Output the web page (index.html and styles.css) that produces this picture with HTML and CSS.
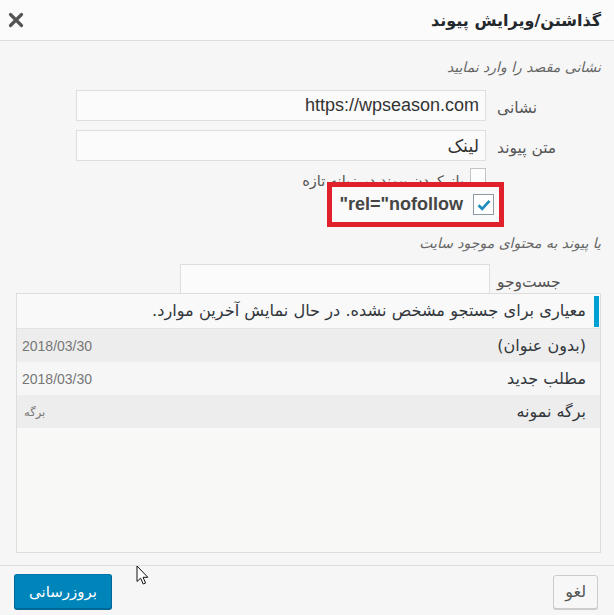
FILE: index.html
```html
<!DOCTYPE html>
<html lang="fa" dir="rtl">

<head>
  <meta charset="UTF-8" />
  <meta name="viewport" content="width=device-width, initial-scale=1.0" />
  <title>گذاشتن/ویرایش پیوند</title>
  <link rel="stylesheet" href="styles.css">
</head>

<body>
  <div class="dialog">
    <div class="dlg-head">
      <h1>گذاشتن/ویرایش پیوند</h1>
      <button class="close" aria-label="بستن">
        <svg width="16" height="16" viewBox="0 0 16 16">
          <path d="M2.5 2.5L13.5 13.5M13.5 2.5L2.5 13.5" stroke="#555" stroke-width="3.2" stroke-linecap="round" />
        </svg>
      </button>
    </div>

    <div class="dlg-body">
      <p class="howto">نشانی مقصد را وارد نمایید</p>
      <div class="field">
        <span class="label">نشانی</span>
        <input class="text-input latin" type="text" value="https://wpseason.com">
      </div>
      <div class="field">
        <span class="label">متن پیوند</span>
        <input class="text-input" type="text" value="لینک">
      </div>
      <div class="check-row">
        <span class="box"></span>
        <span class="check-text">باز کردن پیوند در زبانه تازه</span>
      </div>

      <p class="howto second">یا پیوند به محتوای موجود سایت</p>
      <div class="field search">
        <span class="label">جست‌وجو</span>
        <input class="text-input" type="text">
      </div>

      <div class="results">
        <div class="notice">معیاری برای جستجو مشخص نشده. در حال نمایش آخرین موارد.</div>
        <ul>
          <li class="alt"><span class="item-title">(بدون عنوان)</span><span class="info">2018/03/30</span></li>
          <li><span class="item-title">مطلب جدید</span><span class="info">2018/03/30</span></li>
          <li class="alt"><span class="item-title">برگه نمونه</span><span class="info small">برگه</span></li>
        </ul>
      </div>
    </div>

    <div class="dlg-foot">
      <button class="btn">لغو</button>
      <button class="btn primary">بروزرسانی</button>
    </div>

    <!-- red highlight drawn over the form -->
    <div class="highlight">
      <span class="box checked">
        <svg width="14" height="12" viewBox="0 0 14 12">
          <path d="M1.5 6.2L5.2 9.8L12.5 1.8" fill="none" stroke="#1e8cbe" stroke-width="2.6" />
        </svg>
      </span>
      <span class="nofollow">rel="nofollow"</span>
    </div>

    <svg class="cursor" width="13" height="20" viewBox="0 0 13 20">
      <path d="M1 1V16.5L4.6 13.2L7.2 19L9.6 18L7 12.3H11.8Z" fill="#fff" stroke="#111" stroke-width="1" stroke-linejoin="round" />
    </svg>
  </div>
</body>

</html>
```

FILE: styles.css
```css
body {
  margin: 0;
  font-family: "DejaVu Sans", sans-serif;
  background: #f6f6f6;
  color: #333;
}

.dialog {
  position: relative;
  width: 614px;
  height: 615px;
  overflow: hidden;
  background: #f6f6f6;
}

.dlg-head {
  height: 40px;
  background: #fbfbfb;
  border-bottom: 1px solid #dcdcdc;
  display: flex;
  align-items: center;
  justify-content: space-between;
  padding: 0 13px 0 8px;
}

.dlg-head h1 {
  margin: 0;
  font-size: 16px;
  font-weight: bold;
  color: #23282d;
}

.close {
  border: none;
  background: none;
  padding: 0;
  width: 16px;
  height: 16px;
  cursor: pointer;
}

.dlg-body {
  padding: 16px 13px 12px 14px;
}

.howto {
  margin: 0;
  font-size: 14px;
  line-height: 20px;
  font-style: italic;
  color: #666;
}

.howto.second {
  margin-top: 49px;
}

.field {
  display: flex;
  align-items: center;
  margin-top: 13px;
}

.field + .field {
  margin-top: 9px;
}

.field .label {
  width: 104px;
  text-align: left;
  font-size: 15.5px;
  color: #555;
  padding-top: 4px;
}

.text-input {
  box-sizing: border-box;
  width: 410px;
  height: 31px;
  margin: 0 11px 0 0;
  padding: 0 6px;
  border: 1px solid #dedede;
  background: #fbfbfb;
  font-family: "DejaVu Sans", sans-serif;
  font-size: 17.5px;
  color: #333;
  direction: rtl;
}

.text-input.latin {
  font-family: "Liberation Sans", "DejaVu Sans", sans-serif;
  font-size: 18px;
}

.field.search {
  margin-top: 11px;
}

.field.search .text-input {
  width: 310px;
  margin-right: 7px;
}

.check-row {
  display: flex;
  align-items: flex-start;
  margin: 7px 115px 0 0;
  height: 16px;
}

.box {
  box-sizing: border-box;
  display: inline-flex;
  align-items: center;
  justify-content: center;
  width: 16px;
  height: 16px;
  border: 1px solid #c4c4c4;
  background: #fdfdfd;
}

.check-text {
  margin: 5px 6px 0 0;
  font-size: 14.5px;
  color: #555;
}

.highlight {
  position: absolute;
  left: 327px;
  top: 182px;
  box-sizing: border-box;
  width: 177px;
  height: 45px;
  border: 5px solid #e0202a;
  background: #fafafa;
  display: flex;
  align-items: center;
  padding-right: 5px;
}

.box.checked {
  width: 21px;
  height: 21px;
  border-color: #8c9aa5;
  background: #fff;
}

.nofollow {
  margin-right: 10px;
  font-family: "Liberation Sans", Arial, sans-serif;
  font-size: 18px;
  font-weight: bold;
  color: #454545;
}

.results {
  position: relative;
  height: 260px;
  margin: -2px 0 0 2px;
  box-sizing: border-box;
  border: 1px solid #dddddd;
  background: #f8f8f7;
}

.notice {
  position: relative;
  height: 34px;
  line-height: 34px;
  padding-right: 14px;
  background: #f9f9f9;
  border-bottom: 1px solid #e3e3e3;
  font-size: 16.2px;
  color: #32373c;
}

.notice::before {
  content: "";
  position: absolute;
  right: 1px;
  top: 2px;
  bottom: 1px;
  width: 5px;
  background: #00a0d2;
}

.results ul {
  list-style: none;
  margin: 0;
  padding: 0;
}

.results li {
  display: flex;
  justify-content: space-between;
  align-items: center;
  height: 33px;
  padding: 0 14px 0 5px;
  background: #f6f6f6;
}

.results li.alt {
  background: #ededed;
}

.item-title {
  font-size: 16px;
  color: #32373c;
}

.info {
  font-family: "Liberation Sans", "DejaVu Sans", sans-serif;
  font-size: 14px;
  color: #777;
}

.info.small {
  font-family: "DejaVu Sans", sans-serif;
  font-size: 11.5px;
  padding-left: 2px;
}

.dlg-foot {
  display: flex;
  justify-content: space-between;
  align-items: center;
  border-top: 1px solid #dcdcdc;
  padding: 8px 16px 0 14px;
}

.btn {
  height: 34px;
  padding: 0 11px;
  border: 1px solid #cccccc;
  border-radius: 3px;
  background: #f7f7f7;
  box-shadow: 0 1px 0 #cccccc;
  font-family: "DejaVu Sans", sans-serif;
  font-size: 16px;
  color: #555;
  cursor: pointer;
}

.btn.primary {
  width: 98px;
  height: 35px;
  padding: 0;
  border-color: #0073aa #006799 #006799;
  background: #0085ba;
  box-shadow: 0 1px 0 #006799;
  font-size: 15px;
  color: #fff;
}

.cursor {
  position: absolute;
  left: 136px;
  top: 565px;
}
```
